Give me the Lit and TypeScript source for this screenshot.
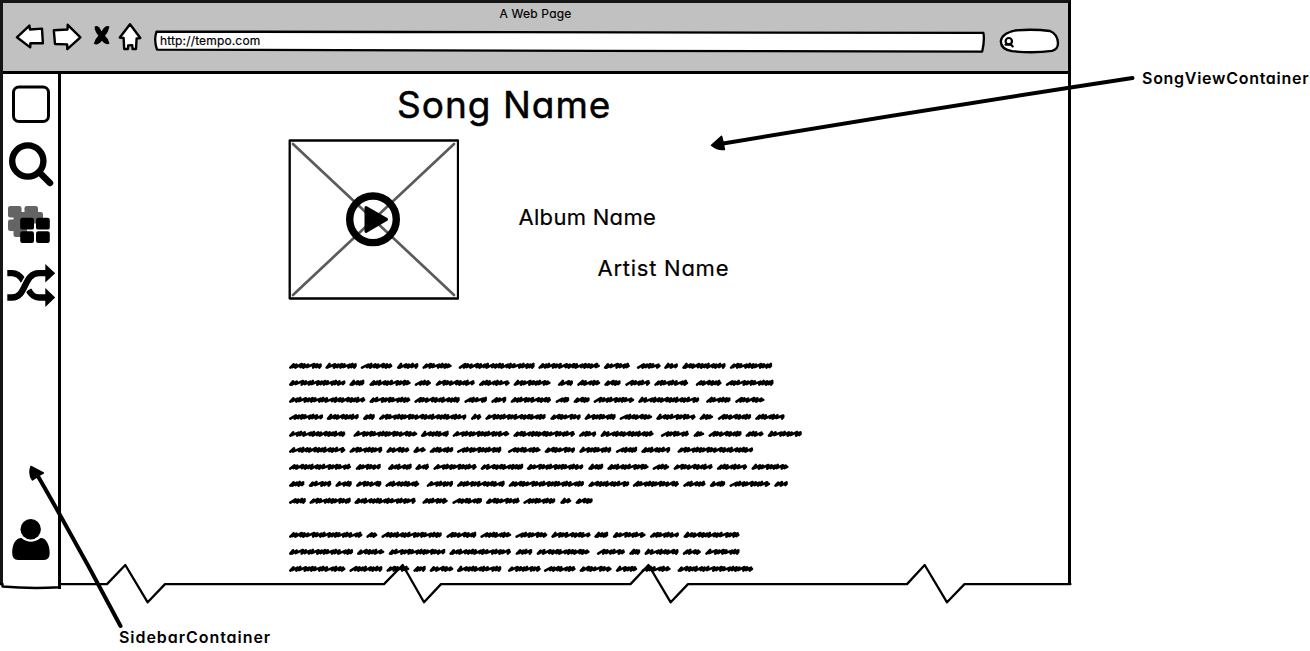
import { LitElement, html, svg, css } from "lit";
import { customElement, property } from "lit/decorators.js";

// Word extents of each scribbled line, in thirds of a pixel.
const VERSES: number[][][] = [
  [
    [28,125,137,230,243,337,352,415,428,515,537,764,776,960,973,1050,1072,1142,1154,1194,1208,1337,1351,1477],
    [28,196,209,253,269,392,405,453,468,584,598,689,702,812,835,879,893,961,974,1022,1037,1111,1124,1225,1249,1325,1339,1481],
    [28,256,269,391,404,539,554,621,635,679,693,813,828,868,882,929,942,1063,1076,1258,1280,1352,1367,1454],
    [28,129,141,236,250,284,298,559,574,604,617,797,812,902,915,1007,1020,1117,1130,1247,1260,1300,1315,1414,1427,1514],
    [28,196,221,412,424,506,519,688,701,885,898,949,963,1121,1144,1227,1242,1273,1287,1385,1398,1451,1465,1566],
    [28,196,209,307,320,388,401,437,450,520,532,664,685,782,795,885,899,994,1009,1072,1085,1171,1194,1420],
    [28,213,228,302,325,395,407,447,461,590,603,730,742,910,926,970,983,1106,1119,1168,1182,1298,1312,1402,1416,1526],
    [28,73,87,154,167,215,229,304,317,418,441,519,532,674,687,912,926,1048,1060,1197,1211,1277,1291,1336,1350,1471,1484,1524],
    [28,77,89,212,224,407,428,503,518,606,619,719,731,826,842,874,888,938],
  ],
  [
    [28,247,260,292,305,485,500,589,602,694,707,802,815,932,944,985,1000,1097,1111,1197,1212,1379],
    [28,219,232,313,327,496,509,693,708,757,771,929,952,1035,1049,1081,1095,1196,1210,1263,1277,1379],
    [28,196,209,307,320,388,401,437,450,520,532,664,685,782,793,887,900,995,1009,1072,1086,1172,1194,1420],
  ],
];

const STEPS = [3.4, 2.8, 5.2, 2.7, 3.7, 6.2, 3, 4.2, 2.8, 5.6, 3.2];

function scribble(line: number[], seed: number): string {
  let d = "";
  let k = seed * 3;
  for (let i = 0; i < line.length; i += 2) {
    let x = line[i] / 3 - 9.3 + 1.2;
    const end = line[i + 1] / 3 - 9.3 - 1;
    d += `M${x.toFixed(1)} 9.6`;
    while (x < end - 2) {
      const step = Math.min(STEPS[k++ % STEPS.length], end - x);
      const top = x + step;
      d += `L${top.toFixed(1)} ${(6 + (k % 3) * 0.3).toFixed(1)}L${(top - 1.2).toFixed(1)} ${(9.6 - (k % 2) * 0.5).toFixed(1)}`;
      x = top;
    }
    d += `L${end.toFixed(1)} 7.9`;
  }
  return d;
}

@customElement("scribble-lines")
export class ScribbleLines extends LitElement {
  @property({ attribute: false }) lines: number[][] = [];

  static styles = css`
    :host { display: flex; flex-direction: column; }
    svg { display: block; width: 513px; height: 16.9px; overflow: hidden; }
    path { fill: none; stroke: #000; stroke-width: 2.6; stroke-linejoin: round; stroke-linecap: round; }
  `;

  render() {
    return this.lines.map(
      (l, i) => html`<svg viewBox="0 0 513 16.9"><path d=${scribble(l, i)}></path></svg>`
    );
  }
}

@customElement("app-root")
export class AppRoot extends LitElement {
  static styles = css`
    :host {
      display: block; position: relative; width: 1310px; height: 651px; overflow: hidden;
      background: #fff; color: #000;
      font-family: Inter, "Open Sans", sans-serif; font-feature-settings: "cv11" 1;
    }
    * { box-sizing: border-box; }
    svg { display: block; flex: none; }
    .ink { fill: none; stroke: #000; stroke-linejoin: round; stroke-linecap: round; }
    .paper { fill: #fff; }
    .solid { fill: #000; }
    .window { width: 1071px; height: 585px; display: flex; flex-direction: column; border: 3px solid #000; border-top-color: #151515; border-bottom: 0; border-left-color: #151515; }
    .toolbar { height: 71px; flex: none; background: #c1c1c1; border-bottom: 3px solid #000; display: flex; flex-direction: column; }
    .title { height: 19px; line-height: 21px; font-size: 12px; text-align: center; letter-spacing: 0.2px; -webkit-text-stroke: 0.2px #000; }
    .controls { display: flex; align-items: flex-start; padding-left: 11px; }
    .nav { display: flex; }
    .field { display: grid; }
    .field > * { grid-area: 1 / 1; }
    .url { line-height: 38px; font-size: 12px; letter-spacing: 0.15px; padding-left: 8px; -webkit-text-stroke: 0.2px #000; }
    .body { display: flex; flex: 1; min-height: 0; }
    .sidebar { width: 58px; height: 515px; flex: none; border-right: 3px solid #000; display: flex; flex-direction: column; justify-content: space-between; align-items: center; }
    .song { flex: 1; min-width: 0; padding-left: 227px; }
    h1 { margin: 0; padding: 8px 0 0 109px; height: 65px; line-height: 46px; font-size: 37px; font-weight: 400; letter-spacing: 1px; -webkit-text-stroke: 0.5px #000; }
    .details { display: flex; height: 219px; }
    .names { padding: 64px 0 0 59.5px; font-size: 22px; line-height: 28px; letter-spacing: 0.3px; -webkit-text-stroke: 0.2px #000; }
    .artist { padding: 23px 0 0 79px; letter-spacing: 0.75px; }
    .lyrics { display: flex; flex-direction: column; gap: 17px; padding-left: 1px; }
    .overlay { position: absolute; left: 0; top: 0; }
    .note { position: absolute; font-size: 16px; line-height: 20px; font-weight: 600; white-space: nowrap; }
    .note-song { left: 1142px; top: 68px; letter-spacing: 0.72px; }
    .note-side { left: 119px; top: 627px; letter-spacing: 0.95px; }
  `;

  private toolbar() {
    return html`
      <div class="toolbar">
        <div class="title"><span>A Web Page</span></div>
        <div class="controls">
          <div class="nav">
            <svg width="138" height="34" viewBox="14 22 138 34">
              <g class="ink paper" stroke-width="2.4">
                <path d="M16.9 37.3 29.4 25.6 30 29.5 42 28.6 42.9 43.2 30.4 43.3 30.2 47.4Z"></path>
                <path d="M53.8 30.2 67.5 29.5 67.7 24.8 80.4 37.3 67.3 49.2 67.2 44.4 55 44Z"></path>
                <path d="M130 24.2 119.8 37.6 123.6 38 124.2 49 128 49 128.2 45.4 132.2 45.2 132.6 49 136 49 136.6 38.5 140.3 38Z"></path>
              </g>
              <path d="M94.6 26.6Q98.5 24.5 101.5 31.5Q105.5 24.5 109.5 26.6Q108.5 32 105 35.8Q108.8 39 109.5 43.5Q105.5 45.8 101.9 40.8Q97 46.5 93.8 43.6Q94.8 39 98.3 35.7Q94.5 31 94.6 26.6Z"></path>
            </svg>
          </div>
          <div class="field">
            <svg width="842" height="34" viewBox="152 22 842 34">
              <path class="ink paper" stroke-width="2.3" d="M156.5 31.6 400 32 983.4 32.9Q984.8 40 982.2 51.6L600 50.8 157 49.6Q153.6 40 156.5 31.6Z"></path>
            </svg>
            <span class="url">http://tempo.com</span>
          </div>
          <svg width="70" height="34" viewBox="994 22 70 34">
            <path class="ink paper" stroke-width="2.3" d="M1012 51.2Q1001 49.4 1000.8 41.4Q1001.5 33.4 1015 30.5Q1033 28.8 1050 31Q1057.5 34 1058 43Q1058 49.5 1052 50.8Q1034 53.5 1012 51.2Z"></path>
            <g class="ink" stroke-width="2.2"><circle cx="1008.8" cy="41.2" r="3.2"></circle><path d="M1010.2 43.8 1012.7 46.4M1005.5 44.6H1010"></path></g>
          </svg>
        </div>
      </div>`;
  }

  private sidebar() {
    return html`
      <div class="sidebar">
        <svg width="55" height="240" viewBox="3 74 55 240">
          <rect class="ink" x="13.5" y="87" width="35" height="34.5" rx="5.5" stroke-width="3"></rect>
          <g class="ink"><circle cx="27.8" cy="161" r="15.6" stroke-width="6.4"></circle><path stroke-width="6.5" d="M39 172 50 183"></path></g>
          <g fill="#646464">
            <rect x="8" y="206" width="13.5" height="11.5" rx="2.2"></rect><rect x="24.5" y="206" width="13.5" height="11.5" rx="2.2"></rect>
            <rect x="8" y="219.5" width="13.5" height="11.5" rx="2.2"></rect><rect x="13.5" y="212" width="15" height="13" rx="2.2"></rect>
            <rect x="29.5" y="212" width="13.5" height="11.5" rx="2.2"></rect><rect x="13.5" y="225.5" width="13.5" height="11.5" rx="2.2"></rect>
            <rect x="18" y="212" width="18" height="8"></rect>
          </g>
          <rect x="20.2" y="217.8" width="13.8" height="11.8" rx="2.2"></rect><rect x="36" y="217.8" width="13.8" height="11.8" rx="2.2"></rect>
          <rect x="20.2" y="231.2" width="13.8" height="11.8" rx="2.2"></rect><rect x="36" y="231.2" width="13.8" height="11.8" rx="2.2"></rect>
          <g fill="none" stroke="#000" stroke-width="6.3">
            <path d="M7.3 273.2H12C18 273.2 21 277 23.5 281M28.5 290C31.5 295.5 34 297.5 39 297.5H46"></path>
            <path stroke="#fff" stroke-width="9" d="M19 294C25 290 25 279 34 274"></path>
            <path d="M7.3 297.5H12C27 297.5 23 273.2 39 273.2H46"></path>
          </g>
          <path d="M45.3 264 55.2 273.2 45.3 282.5ZM45.3 288 55.2 297.5 45.3 307Z"></path>
        </svg>
        <svg width="55" height="75" viewBox="3 514 55 75">
          <circle cx="30.7" cy="529.2" r="10.2"></circle>
          <path d="M21.5 538Q30.8 545.5 40.5 538C47 538 49.7 546 49.7 553Q49.7 560 44 560H18Q12.2 560 12.2 553C12.2 545 15 538 21.5 538Z"></path>
        </svg>
      </div>`;
  }

  private song() {
    return html`
      <div class="song">
        <h1>Song Name</h1>
        <div class="details">
          <svg width="171" height="161" viewBox="288 139 171 161">
            <path stroke="#5b5b5b" stroke-width="2.7" stroke-linecap="round" d="M293 144 454 295M454 144 293 295"></path>
            <rect class="ink" x="289.7" y="140.5" width="168.3" height="158" stroke-width="2.3"></rect>
            <circle class="ink" cx="373" cy="219.3" r="23.3" stroke-width="7.4"></circle>
            <path stroke="#000" stroke-width="3" stroke-linejoin="round" d="M366 207.5 386.5 219.4 366 231.5Z"></path>
          </svg>
          <div class="names">
            <div class="album"><span>Album Name</span></div>
            <div class="artist"><span>Artist Name</span></div>
          </div>
        </div>
        <div class="lyrics">
          ${VERSES.map((v) => html`<scribble-lines .lines=${v}></scribble-lines>`)}
        </div>
      </div>`;
  }

  render() {
    const tears = [
      [107, 125.3, 147.7, 165],
      [384, 402.7, 424, 441],
      [630.5, 648.5, 670.7, 688],
      [907, 924.7, 947, 964.5],
    ];
    const tearPath = tears.map(([a, b, c, e]) => `L${a} 584.1L${b} 565L${c} 602.3L${e} 584.1`).join("");
    return html`
      <div class="window">
        ${this.toolbar()}
        <div class="body">${this.sidebar()}${this.song()}</div>
      </div>
      <svg class="overlay" width="1310" height="651" viewBox="0 0 1310 651">
        ${svg`<path class="ink" stroke-width="2.3" d=${"M60 584.1" + tearPath + "L1070.5 584.1"}></path>`}
        <path class="ink" stroke-width="2.4" d="M0 584H2.5V586.5Q30 589 59.5 587.3V580"></path>
        <path class="ink" stroke-width="4" d="M1132.5 78Q926 109.5 720 144M120.5 626Q80 549 35 471"></path>
        <path class="ink solid" stroke-width="1.5" d="M711.5 145.2 721.5 136.3Q722 138 723 142L724.4 149.4Q718 150.5 711.5 145.2ZM31 466.5 43.3 473Q39 475 37 477L32.5 480Q28.3 474 31 466.5Z"></path>
      </svg>
      <div class="note note-song">SongViewContainer</div>
      <div class="note note-side">SidebarContainer</div>`;
  }
}
